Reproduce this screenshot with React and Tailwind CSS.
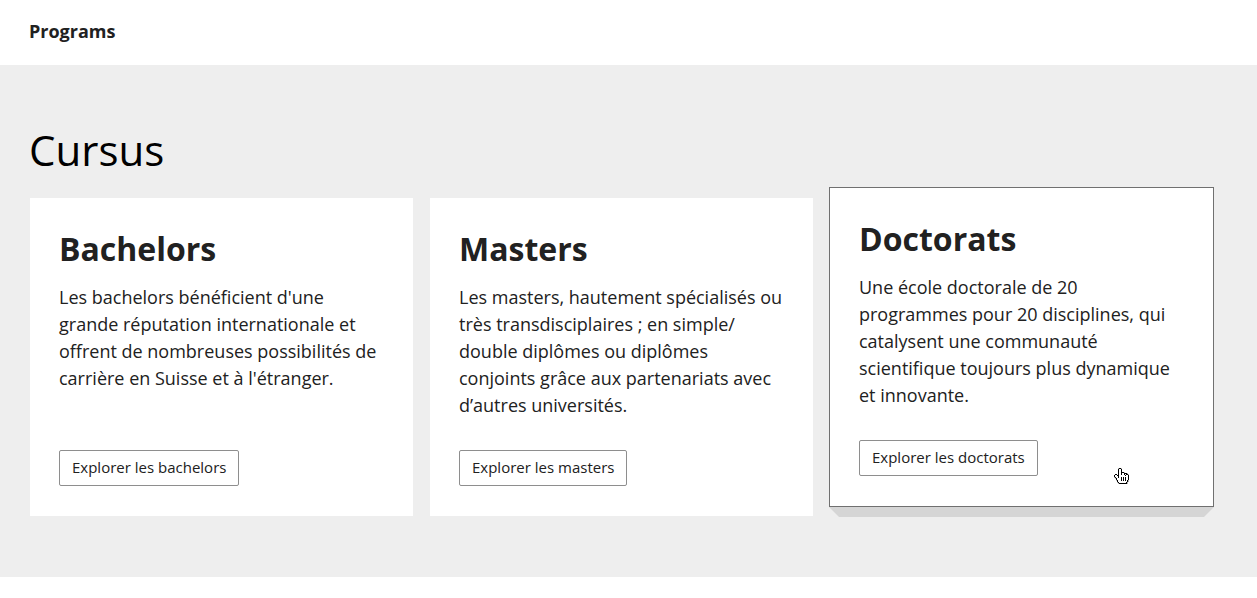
const programs = [
  {
    title: "Bachelors",
    text: "Les bachelors bénéficient d'une grande réputation internationale et offrent de nombreuses possibilités de carrière en Suisse et à l'étranger.",
    link: "Explorer les bachelors",
  },
  {
    title: "Masters",
    // zero-width space: allows a line break after the slash
    text: "Les masters, hautement spécialisés ou très transdisciplaires ; en simple/\u200Bdouble diplômes ou diplômes conjoints grâce aux partenariats avec d’autres universités.",
    link: "Explorer les masters",
  },
  {
    title: "Doctorats",
    text: "Une école doctorale de 20 programmes pour 20 disciplines, qui catalysent une communauté scientifique toujours plus dynamique et innovante.",
    link: "Explorer les doctorats",
    raised: true,
  },
];

// x: outline, o: fill, s: soft shadow, dot: transparent
const handRows = [
  "....sxxs.......",
  "....xoox.......",
  "....xoox.......",
  "....xoox.......",
  "....xooxxxs....",
  "....xooxooxxxs.",
  ".xx.xooxooxoxxs",
  "xooxxooooooxoox",
  "xoooxooooooooox",
  "sxooxooxoxoxoox",
  ".sxooooxoxoxoox",
  "..xooooxoxoxoox",
  "..sxoooxoxoxoxs",
  "...xoooooooooxs",
  "...sxoooooooxs.",
  "....sxxxxxxxxs.",
];
const handColors = { x: "#000", o: "#fff", s: "#b5b5b5" };

function HandPointer() {
  return (
    <svg
      className="pointer-events-none absolute right-[84px] bottom-[22px] h-4 w-[15px]"
      viewBox="0 0 15 16"
      shapeRendering="crispEdges"
      aria-hidden="true"
    >
      {handRows.flatMap((row, y) =>
        [...row].map((c, x) =>
          c === "." ? null : (
            <rect key={x + "-" + y} x={x} y={y} width="1" height="1" fill={handColors[c]} />
          )
        )
      )}
    </svg>
  );
}

function ProgramCard({ title, text, link, raised }) {
  return (
    <article
      className={
        "relative flex flex-col items-start border bg-white bg-clip-padding px-[29px] pt-[29px] pb-[30px] " +
        (raised ? "-translate-y-2.5 border-[#707070]" : "border-transparent")
      }
    >
      <h3 className="text-[32px] leading-[44px] font-bold">{title}</h3>
      <p className="mt-[13px] mb-[31px] text-[18px] leading-[27px]">{text}</p>
      <a
        href="#"
        className="mt-auto rounded-xs border border-[#8e8e8e] px-3 pt-1.5 pb-2 text-[15px] leading-5"
      >
        {link}
      </a>
      {raised && (
        <>
          <div className="absolute top-full -right-px -left-px mt-px h-2.5 bg-[#d5d5d5] [clip-path:polygon(0_0,100%_0,calc(100%-10px)_100%,10px_100%)]" />
          <HandPointer />
        </>
      )}
    </article>
  );
}

export default function App() {
  return (
    <div className="min-h-screen bg-white font-['Open_Sans',sans-serif] text-[#212121]">
      <header className="pt-[18px] pr-[43px] pb-5 pl-[29px]">
        <h1 className="text-[18px] leading-[27px] font-bold">Programs</h1>
      </header>
      <section className="bg-[#eeeeee] pt-14 pr-[43px] pb-[60px] pl-[29px]">
        <h2 className="text-[42px] leading-[58px] text-black">Cursus</h2>
        <div className="mt-[18px] grid grid-cols-3 gap-[15px]">
          {programs.map((p) => (
            <ProgramCard key={p.title} {...p} />
          ))}
        </div>
      </section>
    </div>
  );
}
